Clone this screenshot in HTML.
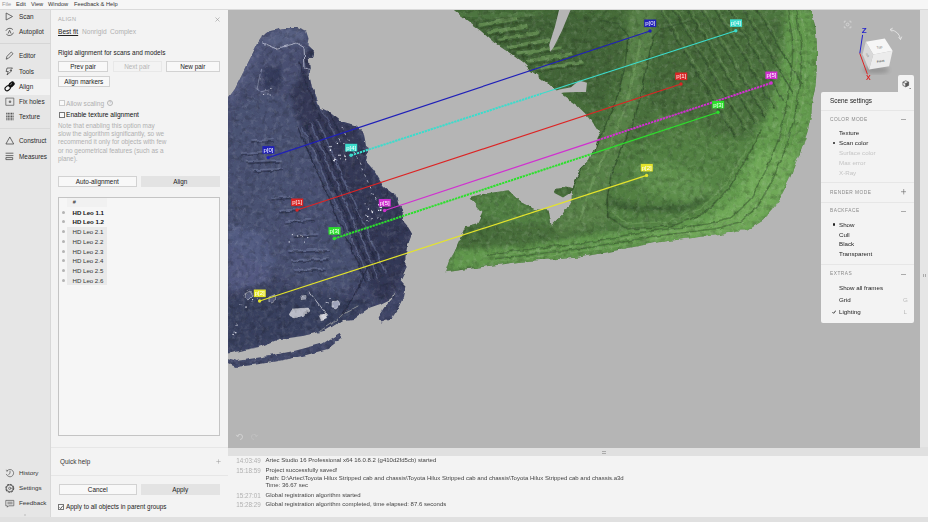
<!DOCTYPE html>
<html><head><meta charset="utf-8"><title>Artec Studio</title>
<style>
*{box-sizing:border-box;margin:0;padding:0}
html,body{width:928px;height:522px;overflow:hidden;background:#e0e0e0;font-family:"Liberation Sans",sans-serif;font-size:7px;color:#222}
.abs{position:absolute}
#menubar{left:0;top:0;width:928px;height:9px;background:#f6f6f6;font-size:5.7px;line-height:9px;color:#333}
#menubar span{position:absolute;top:0}
#side{left:0;top:10px;width:51px;height:507.4px;background:#e6e6e6;border-right:1px solid #d8d8d8}
.sitem{position:absolute;left:19px;font-size:6.4px;color:#2a2a2a;line-height:9px;white-space:nowrap}
.sico{position:absolute;left:4px;width:12px;height:12px}
#panel{left:51px;top:10px;width:177px;height:507px;background:#f3f3f3}
.btn{position:absolute;height:11px;border:1px solid #d2d2d2;background:#f8f8f8;font-size:6.4px;line-height:9px;text-align:center;color:#222}
.btn.fill{background:#e3e3e3;border-color:#e3e3e3}
.btn.dis{color:#b5b5b5;border-color:#e8e8e8;background:#f3f3f3}
.t{position:absolute;white-space:nowrap;line-height:9px}
#view{left:228px;top:10px;width:692px;height:437.5px;background:#b5b5b5;overflow:hidden}
#rstrip{left:920px;top:10px;width:8px;height:437px;background:#e6e6e6}
#log{left:228px;top:456px;width:700px;height:61px;background:#f3f3f3;font-size:6px;color:#444}
#log .t{line-height:7px}
#scene{left:821px;top:92px;width:93px;height:231px;background:#f3f3f3;border-radius:2px}
#scenetab{left:898px;top:75px;width:16px;height:19px;background:#f3f3f3;border-radius:2px 2px 0 0}
.hd{position:absolute;left:9px;font-size:4.8px;letter-spacing:.5px;color:#8a8a8a;line-height:7px;white-space:nowrap}
.opt{position:absolute;left:18px;font-size:6.2px;color:#222;line-height:8px;white-space:nowrap}
.opt.dis{color:#c4c4c4}
.hr{position:absolute;left:0;width:93px;height:1px;background:#e6e6e6}
.cb{position:absolute;width:6px;height:6px;border:1px solid #777;background:#fafafa}
</style></head><body>
<div id="menubar" class="abs"><span style="left:2px;color:#999">File</span><span style="left:16px">Edit</span><span style="left:31px">View</span><span style="left:48px">Window</span><span style="left:74px">Feedback &amp; Help</span></div>
<div class="abs" style="left:0;top:9px;width:928px;height:1px;background:#dadada"></div>
<div id="side" class="abs"><div class="abs" style="left:0;top:68.5px;width:50px;height:16px;background:#f2f2f2"></div><div class="abs" style="left:0;top:33px;width:51px;height:1px;background:#d6d6d6"></div><div class="abs" style="left:0;top:118px;width:51px;height:1px;background:#d9d9d9"></div><div class="sitem" style="top:2.0px">Scan</div><div class="sitem" style="top:17.3px">Autopilot</div><div class="sitem" style="top:40.9px">Editor</div><div class="sitem" style="top:56.5px">Tools</div><div class="sitem" style="top:71.9px">Align</div><div class="sitem" style="top:87.1px">Fix holes</div><div class="sitem" style="top:102.3px">Texture</div><div class="sitem" style="top:126.1px">Construct</div><div class="sitem" style="top:141.8px">Measures</div><div class="sitem" style="top:458.2px;font-size:6.25px;color:#333">History</div><div class="sitem" style="top:473.3px;font-size:6.25px;color:#333">Settings</div><div class="sitem" style="top:488.4px;font-size:6.25px;color:#333">Feedback</div><svg class="abs" style="left:0;top:0" width="51" height="508" viewBox="0 10 51 508" fill="none" stroke="#4a4a4a" stroke-width="0.8" stroke-linecap="round" stroke-linejoin="round"><path d="M6.5 13.2 L12.5 16.5 L6.5 19.8 Z"/><path d="M6 30.5 A4 4 0 0 1 12.6 29.3 M13.3 33 A4 4 0 0 1 6.6 34.5 M8.3 33.2 L9.6 30.2 L10.9 33.2"/><path d="M6.3 58.8 L7 56.3 L11.3 52 L13 53.7 L8.7 58 Z"/><path d="M7.5 68 L12.5 68 L10 70.5 L12 70.5 L7 75 L8.3 71.5 L6.5 71.5 Z"/><g transform="rotate(-40 7.6 88.3)"><rect x="4.9" y="86.2" width="5.6" height="4.2" rx="2.1" fill="#f6f6f6" stroke="#111" stroke-width="1.1"/></g><g transform="rotate(-40 11.6 84.4)"><rect x="8.5" y="82.3" width="6.2" height="4.2" rx="2.1" fill="#111" stroke="#111" stroke-width="0.6"/></g><path d="M10.6 84.6 L11.6 83.7" stroke="#eee" stroke-width="0.6"/><rect x="6.2" y="98.1" width="7.6" height="7.2" stroke="#555" stroke-width="0.7"/><circle cx="10" cy="101.7" r="1.3" fill="#777" stroke="none"/><path d="M6.2 113.4 H13.6 M6.2 115 H13.6 M6.2 116.6 H13.6 M6.2 118.2 H13.6 M6.2 119.8 H13.6" stroke-width="1.1" stroke="#555" stroke-dasharray="1.1 0.5" stroke-linecap="butt"/><path d="M10 137.3 L13.7 144 L6.3 144 Z"/><path d="M6 153.2 H13 M6 155.6 H13 M6.3 157.6 H12.7 V159.6 H6.3 Z"/><path d="M7.2 470.6 A3.7 3.7 0 1 1 6.4 474.3" stroke="#555" stroke-width="0.7"/><path d="M6.2 470.2 L7.3 470.5 L7 471.7" stroke="#555" stroke-width="0.6"/><path d="M10 471.2 V473.4 L8.6 474.6" stroke="#555" stroke-width="0.7"/><circle cx="9.8" cy="488.3" r="3.4" stroke="#555" stroke-width="0.7"/><circle cx="9.8" cy="488.3" r="3.9" stroke="#555" stroke-width="1.1" stroke-dasharray="1.5 1.56"/><circle cx="9.8" cy="488.3" r="1.2" stroke="#555" stroke-width="0.7"/><path d="M6.2 500.4 H13.8 V505.8 H8.6 L7.4 507.2 V505.8 H6.2 Z M7.8 502.2 H12.2 M7.8 503.8 H12.2" stroke="#555" stroke-width="0.7"/><circle cx="25" cy="515" r="0.7" fill="#aaa" stroke="none"/></svg></div>
<div id="panel" class="abs"><div class="t" style="left:7.0px;top:4.8px;font-size:5.6px;color:#aaa;letter-spacing:.3px">ALIGN</div><svg class="abs" style="left:163.5px;top:6.5px" width="5" height="5" viewBox="0 0 5 5" stroke="#999" stroke-width="0.6"><path d="M0.5 0.5 L4.5 4.5 M4.5 0.5 L0.5 4.5"/></svg><div class="t" style="left:7.0px;top:17.2px;font-size:6.6px;color:#222;text-decoration:underline">Best fit</div><div class="t" style="left:31.0px;top:17.2px;font-size:6.6px;color:#b0b0b0">Nonrigid</div><div class="t" style="left:59.0px;top:17.2px;font-size:6.6px;color:#b0b0b0">Complex</div><div class="t" style="left:7.0px;top:37.9px;font-size:6.45px;color:#222">Rigid alignment for scans and models</div><div class="btn " style="left:7.0px;top:51.0px;width:50.0px">Prev pair</div><div class="btn dis" style="left:61.5px;top:51.0px;width:49.0px">Next pair</div><div class="btn " style="left:114.5px;top:51.0px;width:54.5px">New pair</div><div class="btn " style="left:7.0px;top:66.0px;width:51.5px">Align markers</div><div class="cb" style="left:7.5px;top:90px;border-color:#ccc"></div><div class="t" style="left:15.0px;top:88.6px;font-size:6.6px;color:#b0b0b0">Allow scaling</div><div class="abs" style="left:56.3px;top:90.3px;width:5.6px;height:5.6px;border:0.6px solid #b8b8b8;border-radius:3px;font-size:4.4px;line-height:4.4px;text-align:center;color:#aaa">?</div><div class="cb" style="left:7.5px;top:101.8px"></div><div class="t" style="left:15.0px;top:100.3px;font-size:6.6px;color:#111">Enable texture alignment</div><div class="t" style="left:7.0px;top:110.9px;font-size:6.4px;color:#b0b0b0">Note that enabling this option may</div><div class="t" style="left:7.0px;top:119.2px;font-size:6.4px;color:#b0b0b0">slow the algorithm significantly, so we</div><div class="t" style="left:7.0px;top:127.4px;font-size:6.4px;color:#b0b0b0">recommend it only for objects with few</div><div class="t" style="left:7.0px;top:135.7px;font-size:6.4px;color:#b0b0b0">or no geometrical features (such as a</div><div class="t" style="left:7.0px;top:143.9px;font-size:6.4px;color:#b0b0b0">plane).</div><div class="btn " style="left:7.0px;top:166.0px;width:78.5px">Auto-alignment</div><div class="btn fill" style="left:90.0px;top:166.0px;width:78.5px">Align</div><div class="abs" style="left:7px;top:186.6px;width:161.5px;height:239px;border:1px solid #c4c4c4;background:#f6f6f6"></div><div class="abs" style="left:15.5px;top:216.7px;width:40.5px;height:58.5px;background:#e9e9e9"></div><div class="abs" style="left:15.5px;top:188px;width:40.5px;height:9px;background:#f1f1f1"></div><div class="t" style="left:21.8px;top:187.9px;font-size:5.6px;color:#222">#</div><div class="t" style="left:21.5px;top:197.6px;font-size:6.1px;font-weight:bold;color:#111">HD Leo 1.1</div><div class="abs" style="left:10.799999999999997px;top:200.6px;width:3px;height:3px;border-radius:1.5px;background:#b4b4b4"></div><div class="t" style="left:21.5px;top:207.3px;font-size:6.1px;font-weight:bold;color:#111">HD Leo 1.2</div><div class="abs" style="left:10.799999999999997px;top:210.3px;width:3px;height:3px;border-radius:1.5px;background:#b4b4b4"></div><div class="t" style="left:21.5px;top:217.1px;font-size:6.1px;color:#333">HD Leo 2.1</div><div class="abs" style="left:10.799999999999997px;top:220.1px;width:3px;height:3px;border-radius:1.5px;background:#b4b4b4"></div><div class="t" style="left:21.5px;top:226.8px;font-size:6.1px;color:#333">HD Leo 2.2</div><div class="abs" style="left:10.799999999999997px;top:229.8px;width:3px;height:3px;border-radius:1.5px;background:#b4b4b4"></div><div class="t" style="left:21.5px;top:236.6px;font-size:6.1px;color:#333">HD Leo 2.3</div><div class="abs" style="left:10.799999999999997px;top:239.6px;width:3px;height:3px;border-radius:1.5px;background:#b4b4b4"></div><div class="t" style="left:21.5px;top:246.3px;font-size:6.1px;color:#333">HD Leo 2.4</div><div class="abs" style="left:10.799999999999997px;top:249.3px;width:3px;height:3px;border-radius:1.5px;background:#b4b4b4"></div><div class="t" style="left:21.5px;top:256.0px;font-size:6.1px;color:#333">HD Leo 2.5</div><div class="abs" style="left:10.799999999999997px;top:259.0px;width:3px;height:3px;border-radius:1.5px;background:#b4b4b4"></div><div class="t" style="left:21.5px;top:265.8px;font-size:6.1px;color:#333">HD Leo 2.6</div><div class="abs" style="left:10.799999999999997px;top:268.8px;width:3px;height:3px;border-radius:1.5px;background:#b4b4b4"></div><div class="abs" style="left:0;top:437px;width:177px;height:1px;background:#e6e6e6"></div><div class="abs" style="left:0;top:465px;width:177px;height:1px;background:#e6e6e6"></div><div class="t" style="left:9.0px;top:447.1px;font-size:6.4px;color:#333">Quick help</div><svg class="abs" style="left:164.5px;top:448.5px" width="5" height="5" viewBox="0 0 5 5" stroke="#999" stroke-width="0.5"><path d="M2.5 0.3 V4.7 M0.3 2.5 H4.7"/></svg><div class="btn " style="left:7.5px;top:473.5px;width:78.5px">Cancel</div><div class="btn fill" style="left:90.0px;top:473.5px;width:78.5px">Apply</div><div class="cb" style="left:7.299999999999997px;top:493.8px"></div><svg class="abs" style="left:8.299999999999997px;top:494.6px" width="4.4" height="4.4" viewBox="0 0 4.4 4.4" stroke="#222" stroke-width="0.7" fill="none"><path d="M0.6 2.4 L1.7 3.6 L3.9 0.7"/></svg><div class="t" style="left:15.0px;top:492.3px;font-size:6.35px;color:#222">Apply to all objects in parent groups</div></div>
<div id="view" class="abs"><svg class="abs" style="left:0;top:0" width="692" height="437" viewBox="228 10 692 437" font-family="Liberation Sans, sans-serif"><defs>
<linearGradient id="gb" x1="0" y1="0" x2="1" y2="1"><stop offset="0" stop-color="#474e70"/><stop offset="1" stop-color="#3d4364"/></linearGradient>
<linearGradient id="gg" gradientUnits="userSpaceOnUse" x1="480" y1="20" x2="760" y2="240"><stop offset="0" stop-color="#426736"/><stop offset="0.55" stop-color="#49703c"/><stop offset="1" stop-color="#5f944c"/></linearGradient>
<clipPath id="cb"><polygon points="218.0,112.0 234.9,89.0 241.8,75.2 251.0,56.8 257.9,43.0 262.5,36.0 268.2,31.5 283.2,28.0 297.0,28.0 306.2,31.5 308.5,38.4 307.3,45.3 314.2,52.0 313.0,58.0 308.5,56.8 309.6,68.3 308.5,72.9 311.9,86.7 316.5,98.2 320.0,107.4 329.1,112.0 340.6,121.0 356.7,125.7 363.6,132.6 366.0,145.0 368.8,147.0 366.0,161.6 373.6,170.0 383.6,186.8 397.0,196.8 400.4,207.0 403.8,213.6 402.0,220.0 407.0,225.4 412.0,233.8 407.0,247.0 405.4,257.0 405.4,270.7 400.4,280.7 395.4,290.8 390.3,299.0 380.3,304.0 370.2,307.6 360.0,314.0 353.4,319.0 343.0,320.0 325.7,330.5 302.7,336.0 279.7,339.0 256.7,347.7 228.0,353.4 218.0,355.0"/><polygon points="399.7,279.0 405.5,285.8 403.0,298.0 398.0,308.5 391.0,319.0 381.5,322.5 377.6,317.6 384.5,307.0 393.0,298.0"/><polygon points="218.0,356.0 228.0,358.5 236.6,361.0 265.4,356.5 294.0,351.0 322.8,343.5 339.5,333.0 342.5,337.5 327.6,349.0 304.6,355.5 275.9,361.5 252.9,365.0 235.7,367.0 228.0,363.5 218.0,361.0"/></clipPath>
<clipPath id="cg"><polygon points="446.0,3.0 453.9,10.0 465.4,19.5 481.0,31.0 494.0,42.5 511.0,54.0 522.8,62.6 531.4,71.2 543.0,79.8 557.3,91.3 577.4,105.7 588.9,117.2 600.4,134.4 597.5,140.0 594.7,148.8 589.0,160.0 580.7,167.8 572.0,188.0 571.7,200.0 563.0,214.7 551.6,226.0 548.7,210.4 534.3,209.0 520.0,201.8 508.5,190.3 479.7,194.6 469.7,197.5 482.6,211.8 476.9,223.3 465.4,226.2 453.9,252.0 449.6,259.3 445.2,272.2 485.5,266.4 528.6,260.7 577.4,257.8 608.0,252.0 655.4,242.7 702.8,236.4 720.0,235.0 737.2,230.6 747.3,230.6 751.6,227.8 763.0,220.6 773.0,209.0 781.7,194.7 788.9,180.4 796.0,163.0 801.8,148.8 807.6,131.6 811.3,114.4 812.4,100.0 815.5,87.0 817.0,64.9 817.0,46.0 815.5,27.0 810.7,10.0 809.0,3.0"/><polygon points="553.0,188.9 566.0,187.4 574.5,190.0 563.0,197.5 554.4,193.0"/></clipPath>
<filter id="bl" x="-10%" y="-10%" width="120%" height="120%"><feGaussianBlur stdDeviation="2"/></filter>
<filter id="bs" x="-10%" y="-10%" width="120%" height="120%"><feGaussianBlur stdDeviation="0.5"/></filter>
<filter id="nz" x="0" y="0" width="100%" height="100%"><feTurbulence type="fractalNoise" baseFrequency="0.22" numOctaves="3" seed="3" result="n"/><feColorMatrix in="n" type="matrix" values="0 0 0 0 1  0 0 0 0 1  0 0 0 0 1  1.6 0 0 0 -0.75"/></filter>
<filter id="nzd" x="0" y="0" width="100%" height="100%"><feTurbulence type="fractalNoise" baseFrequency="0.18" numOctaves="3" seed="11" result="n"/><feColorMatrix in="n" type="matrix" values="0 0 0 0 0  0 0 0 0 0  0 0 0 0 0  1.6 0 0 0 -0.75"/></filter>
<filter id="jag" x="-5%" y="-5%" width="110%" height="110%"><feTurbulence type="fractalNoise" baseFrequency="0.12" numOctaves="2" seed="7" result="t"/><feDisplacementMap in="SourceGraphic" in2="t" scale="4.5" xChannelSelector="R" yChannelSelector="G"/></filter>
</defs><g filter="url(#jag)"><g clip-path="url(#cb)"><rect x="216" y="10" width="212" height="370" fill="url(#gb)"/><g filter="url(#bl)"><polygon points="304.0,48.0 314.0,52.0 312.0,87.0 320.0,107.0 340.0,121.0 357.0,126.0 366.0,145.0 366.0,162.0 384.0,187.0 397.0,197.0 404.0,214.0 412.0,234.0 405.0,257.0 405.0,271.0 390.0,299.0 376.0,300.0 364.0,275.0 345.0,225.0 322.0,172.0 302.0,128.0 290.0,95.0 300.0,75.0" fill="#2f3452" opacity="0.8"/><polygon points="232.0,110.0 262.0,92.0 288.0,96.0 300.0,130.0 320.0,172.0 343.0,225.0 362.0,275.0 340.0,295.0 300.0,285.0 250.0,260.0 228.0,240.0" fill="#4d5576" opacity="0.6"/><polygon points="228.0,225.0 262.0,232.0 275.0,262.0 262.0,290.0 228.0,300.0" fill="#59618a" opacity="0.7"/><polygon points="262.0,36.0 283.0,28.0 297.0,28.0 306.0,32.0 305.0,44.0 297.0,43.0 276.0,49.0 262.0,43.0" fill="#5a6286" opacity="0.8"/><polygon points="262.0,44.0 276.0,49.0 297.0,43.0 304.0,48.0 304.0,68.0 283.0,96.0 255.0,96.0 240.0,82.0 252.0,56.0" fill="#4c5475" opacity="0.6"/><polygon points="263.0,69.0 281.0,66.0 281.0,88.0 263.0,90.0" fill="#2b3050" opacity="0.7"/><polygon points="228.0,100.0 241.0,76.0 251.0,57.0 258.0,43.0 262.0,46.0 254.0,60.0 245.0,80.0 232.0,104.0" fill="#626a90" opacity="0.7"/><polygon points="228.0,290.0 260.0,285.0 300.0,290.0 340.0,297.0 376.0,300.0 353.0,319.0 326.0,330.0 280.0,339.0 228.0,353.0" fill="#343a58" opacity="0.7"/></g><g filter="url(#bs)"><polyline points="298.0,128.0 366.0,282.0" fill="none" stroke="#252a44" stroke-width="1.6" opacity="0.8" stroke-linecap="round" stroke-linejoin="round"/><polyline points="302.0,126.4 370.0,280.4" fill="none" stroke="#5d6588" stroke-width="1.6" opacity="0.8" stroke-linecap="round" stroke-linejoin="round"/><polyline points="306.0,124.8 374.0,278.8" fill="none" stroke="#252a44" stroke-width="1.6" opacity="0.8" stroke-linecap="round" stroke-linejoin="round"/><polyline points="310.0,123.2 378.0,277.2" fill="none" stroke="#5d6588" stroke-width="1.6" opacity="0.8" stroke-linecap="round" stroke-linejoin="round"/><polyline points="314.0,121.6 382.0,275.6" fill="none" stroke="#252a44" stroke-width="1.6" opacity="0.8" stroke-linecap="round" stroke-linejoin="round"/><polyline points="318.0,120.0 386.0,274.0" fill="none" stroke="#5d6588" stroke-width="1.6" opacity="0.8" stroke-linecap="round" stroke-linejoin="round"/><polyline points="300.0,62.0 312.0,100.0 330.0,135.0" fill="none" stroke="#262b45" stroke-width="1.5" opacity="0.7" stroke-linecap="round" stroke-linejoin="round"/><polyline points="305.0,62.0 317.0,100.0 335.0,135.0" fill="none" stroke="#596185" stroke-width="1.5" opacity="0.7" stroke-linecap="round" stroke-linejoin="round"/><polyline points="310.0,62.0 322.0,100.0 340.0,135.0" fill="none" stroke="#262b45" stroke-width="1.5" opacity="0.7" stroke-linecap="round" stroke-linejoin="round"/><polyline points="272.0,198.0 291.0,196.5" fill="none" stroke="#6a7296" stroke-width="1.6" opacity="0.7" stroke-linecap="round" stroke-linejoin="round"/><polyline points="272.0,200.0 291.0,198.5" fill="none" stroke="#2a2f4a" stroke-width="1.6" opacity="0.7" stroke-linecap="round" stroke-linejoin="round"/><polyline points="280.0,210.6 301.0,209.1" fill="none" stroke="#6a7296" stroke-width="1.6" opacity="0.7" stroke-linecap="round" stroke-linejoin="round"/><polyline points="280.0,212.6 301.0,211.1" fill="none" stroke="#2a2f4a" stroke-width="1.6" opacity="0.7" stroke-linecap="round" stroke-linejoin="round"/><polyline points="285.0,221.0 314.0,219.5" fill="none" stroke="#6a7296" stroke-width="1.6" opacity="0.7" stroke-linecap="round" stroke-linejoin="round"/><polyline points="285.0,223.0 314.0,221.5" fill="none" stroke="#2a2f4a" stroke-width="1.6" opacity="0.7" stroke-linecap="round" stroke-linejoin="round"/><polyline points="295.0,235.5 318.0,234.0" fill="none" stroke="#6a7296" stroke-width="1.6" opacity="0.7" stroke-linecap="round" stroke-linejoin="round"/><polyline points="295.0,237.5 318.0,236.0" fill="none" stroke="#2a2f4a" stroke-width="1.6" opacity="0.7" stroke-linecap="round" stroke-linejoin="round"/><polyline points="289.0,250.8 327.6,249.3" fill="none" stroke="#6a7296" stroke-width="1.6" opacity="0.7" stroke-linecap="round" stroke-linejoin="round"/><polyline points="289.0,252.8 327.6,251.3" fill="none" stroke="#2a2f4a" stroke-width="1.6" opacity="0.7" stroke-linecap="round" stroke-linejoin="round"/><polyline points="291.0,260.0 327.6,258.5" fill="none" stroke="#6a7296" stroke-width="1.6" opacity="0.7" stroke-linecap="round" stroke-linejoin="round"/><polyline points="291.0,262.0 327.6,260.5" fill="none" stroke="#2a2f4a" stroke-width="1.6" opacity="0.7" stroke-linecap="round" stroke-linejoin="round"/><polyline points="295.0,270.0 324.0,268.5" fill="none" stroke="#6a7296" stroke-width="1.6" opacity="0.7" stroke-linecap="round" stroke-linejoin="round"/><polyline points="295.0,272.0 324.0,270.5" fill="none" stroke="#2a2f4a" stroke-width="1.6" opacity="0.7" stroke-linecap="round" stroke-linejoin="round"/><polyline points="252.0,141.0 273.0,139.5" fill="none" stroke="#6a7296" stroke-width="1.6" opacity="0.7" stroke-linecap="round" stroke-linejoin="round"/><polyline points="252.0,143.0 273.0,141.5" fill="none" stroke="#2a2f4a" stroke-width="1.6" opacity="0.7" stroke-linecap="round" stroke-linejoin="round"/><polyline points="242.0,153.0 262.5,151.5" fill="none" stroke="#6a7296" stroke-width="1.6" opacity="0.7" stroke-linecap="round" stroke-linejoin="round"/><polyline points="242.0,155.0 262.5,153.5" fill="none" stroke="#2a2f4a" stroke-width="1.6" opacity="0.7" stroke-linecap="round" stroke-linejoin="round"/><polyline points="247.0,161.5 280.0,160.0" fill="none" stroke="#6a7296" stroke-width="1.6" opacity="0.7" stroke-linecap="round" stroke-linejoin="round"/><polyline points="247.0,163.5 280.0,162.0" fill="none" stroke="#2a2f4a" stroke-width="1.6" opacity="0.7" stroke-linecap="round" stroke-linejoin="round"/><polyline points="254.0,170.0 283.0,168.5" fill="none" stroke="#6a7296" stroke-width="1.6" opacity="0.7" stroke-linecap="round" stroke-linejoin="round"/><polyline points="254.0,172.0 283.0,170.5" fill="none" stroke="#2a2f4a" stroke-width="1.6" opacity="0.7" stroke-linecap="round" stroke-linejoin="round"/><polyline points="262.5,43.0 276.0,48.7 297.0,43.0 304.0,47.6 305.0,68.0 309.6,69.5" fill="none" stroke="#c9cde0" stroke-width="0.9" opacity="0.85" stroke-linecap="round" stroke-linejoin="round"/><polyline points="262.0,68.0 257.0,88.0 260.0,92.0 268.0,90.0" fill="none" stroke="#aab0cc" stroke-width="0.8" opacity="0.7" stroke-linecap="round" stroke-linejoin="round"/><polyline points="309.4,292.0 327.6,316.0" fill="none" stroke="#e8e8ee" stroke-width="0.8" opacity="0.9" stroke-linecap="round" stroke-linejoin="round"/><polyline points="228.0,354.0 253.0,348.5 276.0,343.7 308.0,337.0 324.0,329.0 335.0,321.7 343.0,314.0 358.0,306.0" fill="none" stroke="#d8d8c8" stroke-width="0.7" opacity="0.7" stroke-linecap="round" stroke-linejoin="round"/><polyline points="343.0,314.0 352.0,300.0 360.0,285.0 366.0,268.0" fill="none" stroke="#23273f" stroke-width="1.4" opacity="0.8" stroke-linecap="round" stroke-linejoin="round"/><polyline points="344.0,128.0 376.0,200.0" fill="none" stroke="#dfe2ee" stroke-width="0.9" opacity="0.0" stroke-linecap="round" stroke-linejoin="round"/></g><line x1="343" y1="127" x2="378" y2="204" stroke="#e0e3ee" stroke-width="0.9" stroke-dasharray="2.5 4" opacity="0.8"/><circle cx="340.0" cy="155.3" r="0.82" fill="#e4e6f0"/><circle cx="345.1" cy="155.3" r="0.87" fill="#e4e6f0"/><circle cx="330.5" cy="149.2" r="0.88" fill="#e4e6f0"/><circle cx="340.4" cy="158.8" r="0.55" fill="#e4e6f0"/><circle cx="337.5" cy="144.4" r="0.72" fill="#e4e6f0"/><circle cx="339.2" cy="139.3" r="0.59" fill="#e4e6f0"/><circle cx="334.5" cy="159.2" r="0.81" fill="#e4e6f0"/><circle cx="332.6" cy="156.5" r="0.56" fill="#e4e6f0"/><circle cx="339.9" cy="141.8" r="0.50" fill="#e4e6f0"/><circle cx="343.9" cy="143.6" r="0.59" fill="#e4e6f0"/><circle cx="345.7" cy="158.2" r="0.62" fill="#e4e6f0"/><circle cx="345.4" cy="150.9" r="0.77" fill="#e4e6f0"/><circle cx="333.3" cy="159.7" r="0.78" fill="#e4e6f0"/><circle cx="345.5" cy="158.7" r="0.62" fill="#e4e6f0"/><circle cx="335.8" cy="142.7" r="0.56" fill="#e4e6f0"/><circle cx="331.0" cy="145.6" r="0.74" fill="#e4e6f0"/><circle cx="366.1" cy="215.2" r="0.64" fill="#e4e6f0"/><circle cx="371.0" cy="217.7" r="0.69" fill="#e4e6f0"/><circle cx="371.1" cy="211.7" r="0.78" fill="#e4e6f0"/><circle cx="366.9" cy="220.6" r="0.51" fill="#e4e6f0"/><circle cx="378.0" cy="218.2" r="0.51" fill="#e4e6f0"/><circle cx="378.6" cy="209.6" r="0.73" fill="#e4e6f0"/><circle cx="366.1" cy="203.8" r="0.57" fill="#e4e6f0"/><circle cx="381.3" cy="206.5" r="0.80" fill="#e4e6f0"/><circle cx="380.9" cy="220.0" r="0.64" fill="#e4e6f0"/><circle cx="371.7" cy="212.4" r="0.81" fill="#e4e6f0"/><circle cx="367.7" cy="216.5" r="0.82" fill="#e4e6f0"/><circle cx="379.8" cy="203.7" r="0.88" fill="#e4e6f0"/><circle cx="367.5" cy="209.1" r="0.74" fill="#e4e6f0"/><circle cx="380.7" cy="209.1" r="0.87" fill="#e4e6f0"/><circle cx="301.1" cy="236.5" r="0.63" fill="#e4e6f0"/><circle cx="292.3" cy="234.6" r="0.56" fill="#e4e6f0"/><circle cx="304.5" cy="242.0" r="0.56" fill="#e4e6f0"/><circle cx="289.2" cy="241.9" r="0.71" fill="#e4e6f0"/><circle cx="297.7" cy="235.9" r="0.74" fill="#e4e6f0"/><circle cx="307.8" cy="237.6" r="0.67" fill="#e4e6f0"/><circle cx="263.6" cy="94.5" r="0.51" fill="#e4e6f0"/><circle cx="267.9" cy="94.0" r="0.55" fill="#e4e6f0"/><circle cx="270.3" cy="94.7" r="0.75" fill="#e4e6f0"/><circle cx="270.9" cy="89.6" r="0.67" fill="#e4e6f0"/><circle cx="240.0" cy="304.8" r="0.62" fill="#e4e6f0"/><circle cx="246.1" cy="307.0" r="0.84" fill="#e4e6f0"/><circle cx="256.5" cy="299.3" r="0.70" fill="#e4e6f0"/><circle cx="251.6" cy="299.7" r="0.62" fill="#e4e6f0"/><circle cx="245.1" cy="295.1" r="0.65" fill="#e4e6f0"/><circle cx="337.8" cy="304.6" r="0.75" fill="#e4e6f0"/><circle cx="330.0" cy="298.4" r="0.54" fill="#e4e6f0"/><circle cx="326.4" cy="302.8" r="0.85" fill="#e4e6f0"/><circle cx="327.8" cy="302.9" r="0.81" fill="#e4e6f0"/><circle cx="333.1" cy="301.6" r="0.80" fill="#e4e6f0"/><circle cx="234.1" cy="332.0" r="0.61" fill="#e4e6f0"/><circle cx="235.8" cy="332.7" r="0.78" fill="#e4e6f0"/><circle cx="233.1" cy="334.5" r="0.76" fill="#e4e6f0"/><circle cx="237.1" cy="325.1" r="0.72" fill="#e4e6f0"/><polygon points="288.3,315.0 292.0,309.0 308.4,308.0 310.0,311.0 304.6,315.0 295.0,317.9" fill="#b9bbc6" stroke="#e6e6ea" stroke-width="0.5"/><polygon points="332.0,302.0 337.0,300.6 339.0,304.0 336.0,308.0 332.0,307.0" fill="#9fa4bb" stroke="#e6e6ea" stroke-width="0.5"/><polygon points="319.0,315.0 326.0,314.0 327.6,318.0 321.0,319.8" fill="#d6d6de" stroke="#e6e6ea" stroke-width="0.5"/><polygon points="269.0,297.0 274.0,295.0 276.0,299.0 272.0,302.0 269.0,301.0" fill="#555c7e" stroke="#e6e6ea" stroke-width="0.5"/><polygon points="246.0,293.0 250.0,291.0 252.0,296.0 248.0,300.0 245.0,298.0" fill="#555c7e" stroke="#e6e6ea" stroke-width="0.5"/><polygon points="300.0,296.0 306.0,295.5 306.0,298.0 300.0,298.5" fill="#9ea3b8" stroke="#e6e6ea" stroke-width="0.5"/><rect x="216" y="10" width="212" height="370" filter="url(#nz)" opacity="0.18"/><rect x="216" y="10" width="212" height="370" filter="url(#nzd)" opacity="0.3"/></g></g><g filter="url(#jag)"><g clip-path="url(#cg)"><rect x="440" y="0" width="390" height="280" fill="url(#gg)"/><g filter="url(#bl)"><polygon points="628.0,10.0 655.0,10.0 653.0,37.0 647.0,66.0 641.0,95.0 633.0,124.0 621.0,150.0 611.0,175.0 607.0,200.0 607.0,222.0 560.0,235.0 551.0,226.0 563.0,214.0 572.0,190.0 581.0,168.0 595.0,150.0 606.0,124.0 618.0,95.0 625.0,66.0 628.0,37.0" fill="#5a8349" opacity="0.9"/><polygon points="786.0,10.0 812.0,10.0 818.0,46.0 816.0,87.0 812.0,115.0 802.0,149.0 789.0,180.0 773.0,209.0 751.0,228.0 720.0,235.0 655.0,243.0 608.0,252.0 577.0,258.0 500.0,265.0 445.0,272.0 455.0,250.0 520.0,246.0 609.0,232.0 671.0,226.0 703.0,214.0 729.0,188.0 749.0,153.0 761.0,130.0 770.0,110.0 778.0,81.0 784.0,52.0" fill="#659d50" opacity="0.85"/><polygon points="760.0,150.0 800.0,150.0 789.0,180.0 773.0,209.0 751.0,228.0 720.0,235.0 655.0,243.0 640.0,236.0 700.0,225.0 735.0,200.0" fill="#76b05f" opacity="0.65"/><polygon points="470.0,20.0 560.0,15.0 620.0,20.0 622.0,60.0 600.0,110.0 580.0,100.0 540.0,75.0 500.0,45.0" fill="#3e5f34" opacity="0.55"/><polygon points="660.0,20.0 780.0,20.0 776.0,80.0 765.0,115.0 745.0,140.0 700.0,130.0 650.0,105.0 655.0,60.0" fill="#406235" opacity="0.5"/><polygon points="625.0,140.0 750.0,150.0 730.0,186.0 700.0,212.0 670.0,224.0 628.0,227.0 610.0,215.0 610.0,180.0" fill="#568544" opacity="0.6"/><polygon points="632.0,168.0 660.0,160.0 700.0,175.0 720.0,195.0 690.0,203.0 650.0,193.0" fill="#699e56" opacity="0.5"/><polygon points="606.0,206.0 640.0,213.0 680.0,212.0 704.0,203.0 712.0,192.0 700.0,198.0 680.0,205.0 640.0,205.0 612.0,198.0" fill="#2d4a29" opacity="0.55"/><polygon points="652.0,110.0 700.0,118.0 716.0,140.0 690.0,150.0 655.0,140.0" fill="#578647" opacity="0.45"/><polygon points="470.0,198.0 508.0,190.0 520.0,202.0 548.0,211.0 550.0,225.0 500.0,225.0 480.0,215.0" fill="#598b48" opacity="0.6"/></g><g filter="url(#bs)"><polyline points="480.0,25.0 516.0,18.5" fill="none" stroke="#6e995a" stroke-width="3.4" opacity="0.7" stroke-linecap="round" stroke-linejoin="round"/><polyline points="481.0,28.6 517.0,22.1" fill="none" stroke="#304d28" stroke-width="1.8" opacity="0.6" stroke-linecap="round" stroke-linejoin="round"/><polyline points="489.5,32.2 527.0,25.7" fill="none" stroke="#6e995a" stroke-width="3.4" opacity="0.7" stroke-linecap="round" stroke-linejoin="round"/><polyline points="490.5,35.8 528.0,29.3" fill="none" stroke="#304d28" stroke-width="1.8" opacity="0.6" stroke-linecap="round" stroke-linejoin="round"/><polyline points="499.0,39.4 538.0,32.9" fill="none" stroke="#6e995a" stroke-width="3.4" opacity="0.7" stroke-linecap="round" stroke-linejoin="round"/><polyline points="500.0,43.0 539.0,36.5" fill="none" stroke="#304d28" stroke-width="1.8" opacity="0.6" stroke-linecap="round" stroke-linejoin="round"/><polyline points="508.5,46.6 549.0,40.1" fill="none" stroke="#6e995a" stroke-width="3.4" opacity="0.7" stroke-linecap="round" stroke-linejoin="round"/><polyline points="509.5,50.2 550.0,43.7" fill="none" stroke="#304d28" stroke-width="1.8" opacity="0.6" stroke-linecap="round" stroke-linejoin="round"/><polyline points="518.0,53.8 560.0,47.3" fill="none" stroke="#6e995a" stroke-width="3.4" opacity="0.7" stroke-linecap="round" stroke-linejoin="round"/><polyline points="519.0,57.4 561.0,50.9" fill="none" stroke="#304d28" stroke-width="1.8" opacity="0.6" stroke-linecap="round" stroke-linejoin="round"/><polyline points="527.5,61.0 571.0,54.5" fill="none" stroke="#6e995a" stroke-width="3.4" opacity="0.7" stroke-linecap="round" stroke-linejoin="round"/><polyline points="528.5,64.6 572.0,58.1" fill="none" stroke="#304d28" stroke-width="1.8" opacity="0.6" stroke-linecap="round" stroke-linejoin="round"/><polyline points="537.0,68.2 582.0,61.7" fill="none" stroke="#6e995a" stroke-width="3.4" opacity="0.7" stroke-linecap="round" stroke-linejoin="round"/><polyline points="538.0,71.8 583.0,65.3" fill="none" stroke="#304d28" stroke-width="1.8" opacity="0.6" stroke-linecap="round" stroke-linejoin="round"/><polyline points="462.0,14.0 500.0,16.0 540.0,13.0" fill="none" stroke="#5a844a" stroke-width="5" opacity="0.5" stroke-linecap="round" stroke-linejoin="round"/><polyline points="658.0,8.0 734.8,136.0" fill="none" stroke="#314e2b" stroke-width="1.6" opacity="0.6" stroke-linecap="round" stroke-linejoin="round"/><polyline points="661.5,8.0 738.3,136.0" fill="none" stroke="#658e53" stroke-width="1.6" opacity="0.5" stroke-linecap="round" stroke-linejoin="round"/><polyline points="672.0,8.0 745.2,130.0" fill="none" stroke="#314e2b" stroke-width="1.6" opacity="0.6" stroke-linecap="round" stroke-linejoin="round"/><polyline points="675.5,8.0 748.7,130.0" fill="none" stroke="#658e53" stroke-width="1.6" opacity="0.5" stroke-linecap="round" stroke-linejoin="round"/><polyline points="686.0,8.0 755.6,124.0" fill="none" stroke="#314e2b" stroke-width="1.6" opacity="0.6" stroke-linecap="round" stroke-linejoin="round"/><polyline points="689.5,8.0 759.1,124.0" fill="none" stroke="#658e53" stroke-width="1.6" opacity="0.5" stroke-linecap="round" stroke-linejoin="round"/><polyline points="700.0,8.0 764.8,116.0" fill="none" stroke="#314e2b" stroke-width="1.6" opacity="0.6" stroke-linecap="round" stroke-linejoin="round"/><polyline points="703.5,8.0 768.3,116.0" fill="none" stroke="#658e53" stroke-width="1.6" opacity="0.5" stroke-linecap="round" stroke-linejoin="round"/><polyline points="714.0,8.0 774.0,108.0" fill="none" stroke="#314e2b" stroke-width="1.6" opacity="0.6" stroke-linecap="round" stroke-linejoin="round"/><polyline points="717.5,8.0 777.5,108.0" fill="none" stroke="#658e53" stroke-width="1.6" opacity="0.5" stroke-linecap="round" stroke-linejoin="round"/><polyline points="728.0,8.0 783.2,100.0" fill="none" stroke="#314e2b" stroke-width="1.6" opacity="0.6" stroke-linecap="round" stroke-linejoin="round"/><polyline points="731.5,8.0 786.7,100.0" fill="none" stroke="#658e53" stroke-width="1.6" opacity="0.5" stroke-linecap="round" stroke-linejoin="round"/><polyline points="742.0,8.0 792.4,92.0" fill="none" stroke="#314e2b" stroke-width="1.6" opacity="0.6" stroke-linecap="round" stroke-linejoin="round"/><polyline points="745.5,8.0 795.9,92.0" fill="none" stroke="#658e53" stroke-width="1.6" opacity="0.5" stroke-linecap="round" stroke-linejoin="round"/><polyline points="756.0,8.0 801.6,84.0" fill="none" stroke="#314e2b" stroke-width="1.6" opacity="0.6" stroke-linecap="round" stroke-linejoin="round"/><polyline points="759.5,8.0 805.1,84.0" fill="none" stroke="#658e53" stroke-width="1.6" opacity="0.5" stroke-linecap="round" stroke-linejoin="round"/><polyline points="628.0,36.0 625.0,66.0 618.0,95.0 606.0,124.0 595.0,150.0 581.0,168.0 572.0,190.0 563.0,214.0" fill="none" stroke="#314e2b" stroke-width="1.5" opacity="0.7" stroke-linecap="round" stroke-linejoin="round"/><polyline points="653.0,37.0 647.0,66.0 641.0,95.0 633.0,124.0 621.0,150.0 611.0,175.0 607.0,200.0 608.0,218.0" fill="none" stroke="#314e2b" stroke-width="1.5" opacity="0.7" stroke-linecap="round" stroke-linejoin="round"/><polyline points="640.0,40.0 636.0,66.0 629.0,95.0 619.0,124.0 608.0,150.0 596.0,172.0 588.0,195.0 580.0,220.0" fill="none" stroke="#739e5e" stroke-width="2.2" opacity="0.55" stroke-linecap="round" stroke-linejoin="round"/><polyline points="600.0,20.0 620.0,24.0 628.0,36.0" fill="none" stroke="#314e2b" stroke-width="1.3" opacity="0.6" stroke-linecap="round" stroke-linejoin="round"/><polyline points="653.0,37.0 660.0,28.0 690.0,22.0" fill="none" stroke="#314e2b" stroke-width="1.3" opacity="0.5" stroke-linecap="round" stroke-linejoin="round"/><polyline points="800.0,10.0 806.0,46.0 806.0,65.0 804.0,87.0 800.0,115.0 791.0,149.0 778.0,180.0 762.0,209.0 745.0,224.0 720.0,231.0 655.0,239.0 608.0,248.0 560.0,254.0 500.0,261.0" fill="none" stroke="#76a661" stroke-width="1.5" opacity="0.55" stroke-linecap="round" stroke-linejoin="round"/><polyline points="795.5,7.8 801.5,43.8 801.5,62.8 799.5,84.8 795.5,112.8 786.5,146.8 773.5,177.8 757.5,206.8 740.5,221.8 715.5,228.8 650.5,236.8 603.5,245.8 555.5,251.8 495.5,258.8" fill="none" stroke="#38592f" stroke-width="1.5" opacity="0.55" stroke-linecap="round" stroke-linejoin="round"/><polyline points="791.0,5.5 797.0,41.5 797.0,60.5 795.0,82.5 791.0,110.5 782.0,144.5 769.0,175.5 753.0,204.5 736.0,219.5 711.0,226.5 646.0,234.5 599.0,243.5 551.0,249.5 491.0,256.5" fill="none" stroke="#76a661" stroke-width="1.5" opacity="0.55" stroke-linecap="round" stroke-linejoin="round"/><polyline points="786.5,3.2 792.5,39.2 792.5,58.2 790.5,80.2 786.5,108.2 777.5,142.2 764.5,173.2 748.5,202.2 731.5,217.2 706.5,224.2 641.5,232.2 594.5,241.2 546.5,247.2 486.5,254.2" fill="none" stroke="#38592f" stroke-width="1.5" opacity="0.55" stroke-linecap="round" stroke-linejoin="round"/><polyline points="609.8,217.3 627.0,229.0 671.0,226.0 703.0,214.4 729.0,188.0 749.5,153.0 761.0,130.0" fill="none" stroke="#37572e" stroke-width="1.6" opacity="0.6" stroke-linecap="round" stroke-linejoin="round"/><polyline points="612.0,212.0 628.0,224.0 670.0,221.0 700.0,210.0 725.0,185.0 745.0,151.0" fill="none" stroke="#74a15f" stroke-width="1.6" opacity="0.5" stroke-linecap="round" stroke-linejoin="round"/></g><rect x="440" y="0" width="390" height="280" filter="url(#nz)" opacity="0.2"/><rect x="440" y="0" width="390" height="280" filter="url(#nzd)" opacity="0.3"/></g></g><polygon points="560.5,4.0 573.0,4.0 561.8,31.0 553.8,47.0 550.3,51.7 549.2,44.8 555.0,26.4" fill="#b5b5b5"/><polygon points="540.0,96.0 559.5,89.6 571.0,87.3 579.0,80.4 587.0,82.7 586.0,92.0 578.0,92.0 564.0,92.6 550.3,94.9" fill="#b5b5b5"/><line x1="268.2" y1="157.6" x2="650.0" y2="31.0" stroke="#2020b8" stroke-width="1.2"/><circle cx="268.2" cy="157.6" r="1.7" fill="#2020b8"/><rect x="262.4" y="146.1" width="12" height="7.6" fill="#2020b8"/><text x="268.4" y="151.9" font-size="6" fill="#fff" text-anchor="middle">p[0]</text><circle cx="650" cy="31" r="1.7" fill="#2020b8"/><rect x="644.2" y="19.5" width="12" height="7.6" fill="#2020b8"/><text x="650.2" y="25.3" font-size="6" fill="#fff" text-anchor="middle">p[0]</text><line x1="351.0" y1="155.3" x2="541.0" y2="93.8" stroke="#3cdccc" stroke-width="2" stroke-dasharray="2.3 0.8"/><line x1="541.0" y1="93.8" x2="735.8" y2="30.8" stroke="#3cdccc" stroke-width="1.2"/><circle cx="351" cy="155.3" r="1.7" fill="#3cdccc"/><rect x="345.2" y="143.8" width="12" height="7.6" fill="#3cdccc"/><text x="351.2" y="149.6" font-size="6" fill="#fff" text-anchor="middle">p[4]</text><circle cx="735.8" cy="30.8" r="1.7" fill="#3cdccc"/><rect x="730.0" y="19.3" width="12" height="7.6" fill="#3cdccc"/><text x="736.0" y="25.1" font-size="6" fill="#fff" text-anchor="middle">p[4]</text><line x1="297.0" y1="210.0" x2="681.0" y2="84.0" stroke="#dc2424" stroke-width="1.2"/><circle cx="297" cy="210" r="1.7" fill="#dc2424"/><rect x="291.2" y="198.5" width="12" height="7.6" fill="#dc2424"/><text x="297.2" y="204.3" font-size="6" fill="#fff" text-anchor="middle">p[1]</text><circle cx="681" cy="84" r="1.7" fill="#dc2424"/><rect x="675.2" y="72.5" width="12" height="7.6" fill="#dc2424"/><text x="681.2" y="78.3" font-size="6" fill="#fff" text-anchor="middle">p[1]</text><line x1="384.6" y1="210.5" x2="598.0" y2="140.1" stroke="#d030d0" stroke-width="1.2"/><line x1="598.0" y1="140.1" x2="771.2" y2="83.0" stroke="#d030d0" stroke-width="2" stroke-dasharray="2.3 0.8"/><circle cx="384.6" cy="210.5" r="1.7" fill="#d030d0"/><rect x="378.8" y="199.0" width="12" height="7.6" fill="#d030d0"/><text x="384.8" y="204.8" font-size="6" fill="#fff" text-anchor="middle">p[5]</text><circle cx="771.2" cy="83" r="1.7" fill="#d030d0"/><rect x="765.4" y="71.5" width="12" height="7.6" fill="#d030d0"/><text x="771.4" y="77.3" font-size="6" fill="#fff" text-anchor="middle">p[5]</text><line x1="334.3" y1="238.6" x2="591.0" y2="154.1" stroke="#2ce02c" stroke-width="2" stroke-dasharray="2.3 0.8"/><line x1="591.0" y1="154.1" x2="718.0" y2="112.3" stroke="#2ce02c" stroke-width="1.2"/><circle cx="334.3" cy="238.6" r="1.7" fill="#2ce02c"/><rect x="328.5" y="227.1" width="12" height="7.6" fill="#2ce02c"/><text x="334.5" y="232.9" font-size="6" fill="#fff" text-anchor="middle">p[3]</text><circle cx="718" cy="112.3" r="1.7" fill="#2ce02c"/><rect x="712.2" y="100.8" width="12" height="7.6" fill="#2ce02c"/><text x="718.2" y="106.6" font-size="6" fill="#fff" text-anchor="middle">p[3]</text><line x1="259.6" y1="301.0" x2="646.6" y2="175.4" stroke="#e4e42c" stroke-width="1.2"/><circle cx="259.6" cy="301" r="1.7" fill="#e4e42c"/><rect x="253.8" y="289.5" width="12" height="7.6" fill="#e4e42c"/><text x="259.8" y="295.3" font-size="6" fill="#fff" text-anchor="middle">p[2]</text><circle cx="646.6" cy="175.4" r="1.7" fill="#e4e42c"/><rect x="640.8" y="163.9" width="12" height="7.6" fill="#e4e42c"/><text x="646.8" y="169.7" font-size="6" fill="#fff" text-anchor="middle">p[2]</text><g><ellipse cx="876" cy="70" rx="13" ry="3.5" fill="#000" opacity="0.18" filter="url(#bl)"/><line x1="862.6" y1="34.9" x2="859.8" y2="53.4" stroke="#2222cc" stroke-width="1"/><line x1="859.8" y1="53.4" x2="867.4" y2="74.3" stroke="#dd2222" stroke-width="1"/><polygon points="865.8,41.7 884.8,38.6 892.6,50.7 873.3,54.6" fill="#f6f6f6"/><polygon points="873.3,54.6 892.6,50.7 889.1,66.3 869,69.5" fill="#ececec"/><polygon points="865.8,41.7 873.3,54.6 869,69.5 862.6,54.2" fill="#d9d9d9"/><text x="879.5" y="48.5" font-size="3.6" fill="#777" text-anchor="middle" transform="rotate(-9 879.5 47)">Top</text><text x="880.5" y="62.2" font-size="3" fill="#555" font-weight="bold" text-anchor="middle" transform="rotate(-9 880.5 61)">Front</text><text x="867.5" y="56" font-size="2.6" fill="#777" text-anchor="middle" transform="rotate(66 867.5 55)">Left</text><text x="864.2" y="32.6" font-size="8" font-weight="bold" fill="#2222cc" text-anchor="middle">Z</text><text x="868.3" y="80.2" font-size="7" font-weight="bold" fill="#dd2222" text-anchor="middle">X</text><g fill="none" stroke="#dcdcdc" stroke-width="0.7"><path d="M844.3 22.8 V21.2 H845.9 M849.3 21.2 H850.9 V22.8 M850.9 26.2 V27.8 H849.3 M845.9 27.8 H844.3 V26.2"/><circle cx="847.6" cy="24.5" r="1.4"/></g><g fill="none" stroke="#e4e4e4" stroke-width="0.9" stroke-linecap="round"><path d="M890.5 29.6 Q899.5 31.5 900.4 39"/><path d="M892.4 28.3 L890 29.5 L892 31.3 M898.8 37.4 L900.5 39.6 L901.6 37"/></g></g><g fill="none" stroke="#d8d8d8" stroke-width="0.8"><path d="M237.5 436 A2.6 2.6 0 1 1 240 439.5 M236.3 434.8 L237.4 436.6 L239 435.6"/><path d="M256.5 436 A2.6 2.6 0 1 0 254 439.5 M257.7 434.8 L256.6 436.6 L255 435.6" stroke="#c2c2c2"/></g></svg></div>
<div id="rstrip" class="abs"><div class="abs" style="left:3px;top:264px;width:1px;height:3px;background:#aaa"></div><div class="abs" style="left:5px;top:264px;width:1px;height:3px;background:#aaa"></div></div>
<div class="abs" style="left:602px;top:451px;width:4px;height:3px;border-top:1px solid #aaa;border-bottom:1px solid #aaa"></div>
<div id="log" class="abs"><div class="t" style="left:8.3px;top:1.1px;color:#b0b0b0;font-size:6.3px">14:03:49</div><div class="t" style="left:37.5px;top:1.1px;">Artec Studio 16 Professional x64 16.0.8.2 (g410d2fd5cb) started</div><div class="t" style="left:8.3px;top:10.7px;color:#b0b0b0;font-size:6.3px">15:18:59</div><div class="t" style="left:37.5px;top:10.7px;">Project successfully saved!</div><div class="t" style="left:37.5px;top:18.7px;">Path: D:\Artec\Toyota Hilux Stripped cab and chassis\Toyota Hilux Stripped cab and chassis\Toyota Hilux Stripped cab and chassis.a3d</div><div class="t" style="left:37.5px;top:26.4px;">Time: 36.67 sec</div><div class="t" style="left:8.3px;top:35.9px;color:#b0b0b0;font-size:6.3px">15:27:01</div><div class="t" style="left:37.5px;top:35.9px;">Global registration algorithm started</div><div class="t" style="left:8.3px;top:45.3px;color:#b0b0b0;font-size:6.3px">15:28:29</div><div class="t" style="left:37.5px;top:45.3px;">Global registration algorithm completed, time elapsed: 87.6 seconds</div></div>
<div id="scenetab" class="abs"><svg class="abs" style="left:4px;top:4.5px" width="10" height="11" viewBox="0 0 10 11" fill="none" stroke="#333" stroke-width="0.6" stroke-linejoin="round"><path d="M3.7 0.8 L6.6 2.1 L6.6 5.4 L3.7 6.8 L0.9 5.4 L0.9 2.1 Z M0.9 2.1 L3.7 3.5 L6.6 2.1 M3.7 3.5 V6.8"/><path d="M3.7 3.5 L6.6 2.1 L6.6 5.4 L3.7 6.8 Z" fill="#555" stroke="none"/><path d="M7.2 8 L9 8 L8.1 9 Z" fill="#444" stroke="none"/></svg></div>
<div id="scene" class="abs"><div class="t" style="left:9px;top:4.3px;font-size:6.4px;color:#222">Scene settings</div><div class="hr" style="top:18px"></div><div class="hr" style="top:90px"></div><div class="hr" style="top:109.5px"></div><div class="hr" style="top:172px"></div><div class="hd" style="top:24.1px">COLOR MODE</div><div class="abs" style="left:80px;top:27.3px;width:5px;height:0.6px;background:#aaa"></div><div class="opt " style="top:37.2px">Texture</div><div class="opt " style="top:47.1px">Scan color</div><div class="opt dis" style="top:57.2px">Surface color</div><div class="opt dis" style="top:67.0px">Max error</div><div class="opt dis" style="top:76.6px">X-Ray</div><div class="hd" style="top:96.5px">RENDER MODE</div><svg class="abs" style="left:79.5px;top:97.3px" width="5.4" height="5.4" viewBox="0 0 5.4 5.4" stroke="#666" stroke-width="0.6"><path d="M2.7 0 V5.4 M0 2.7 H5.4"/></svg><div class="hd" style="top:115.4px">BACKFACE</div><div class="abs" style="left:80px;top:118.6px;width:5px;height:0.6px;background:#aaa"></div><div class="opt " style="top:128.6px">Show</div><div class="opt " style="top:138.5px">Cull</div><div class="opt " style="top:148.4px">Black</div><div class="opt " style="top:158.3px">Transparent</div><div class="hd" style="top:178.3px">EXTRAS</div><div class="abs" style="left:80px;top:181.5px;width:5px;height:0.6px;background:#aaa"></div><div class="opt " style="top:192.3px">Show all frames</div><div class="opt " style="top:204.1px">Grid</div><div class="opt " style="top:215.9px">Lighting</div><div class="abs" style="left:11.700000000000045px;top:49.9px;width:2.4px;height:2.4px;border-radius:1.2px;background:#222"></div><div class="abs" style="left:11.700000000000045px;top:131.4px;width:2.4px;height:2.4px;border-radius:1.2px;background:#222"></div><svg class="abs" style="left:10.5px;top:217.9px" width="4.4" height="4" viewBox="0 0 4.4 4" stroke="#222" stroke-width="0.9" fill="none"><path d="M0.5 2.2 L1.6 3.3 L3.9 0.5"/></svg><div class="opt" style="left:82px;top:204.1px;color:#bbb">G</div><div class="opt" style="left:82.5px;top:215.9px;color:#bbb">L</div></div>
</body></html>
